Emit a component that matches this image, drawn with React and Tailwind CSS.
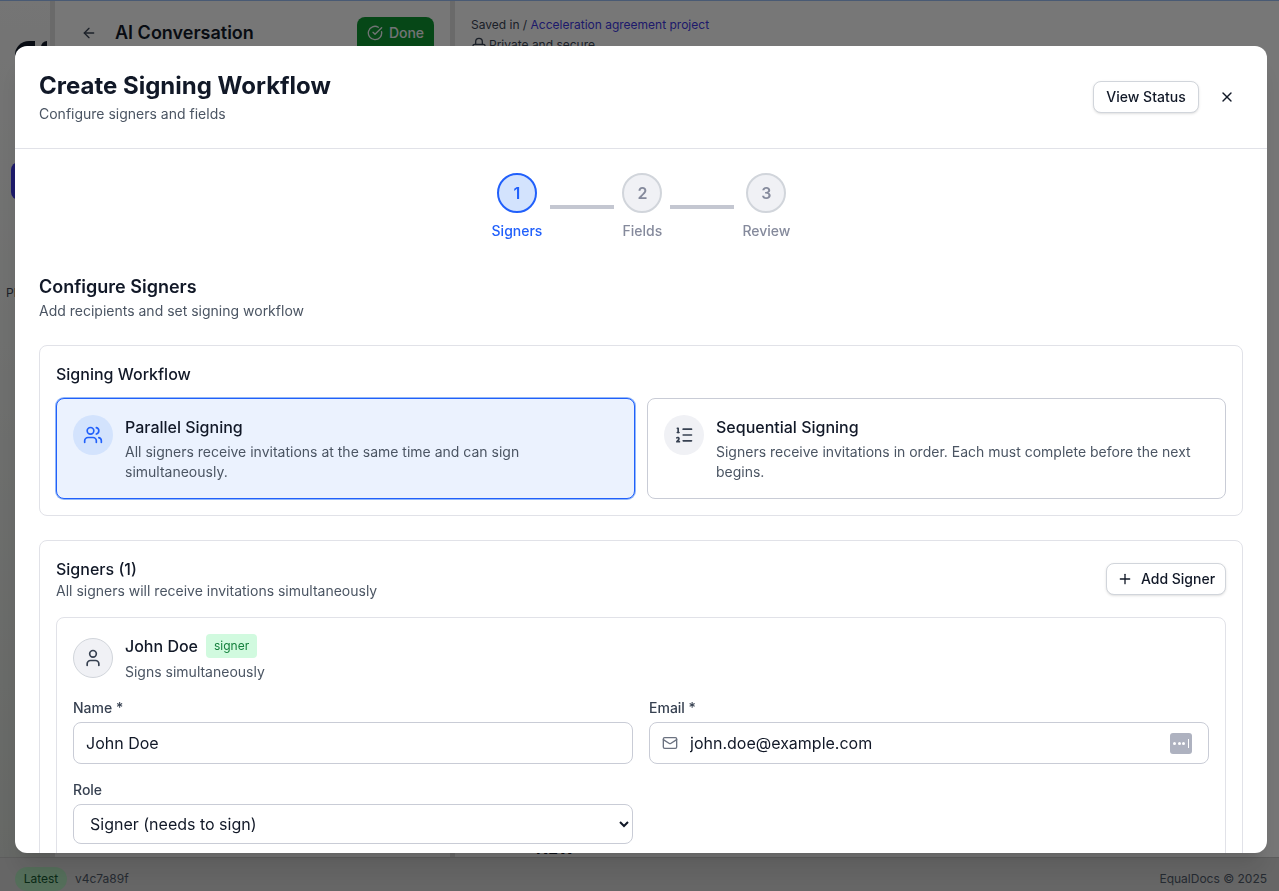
import React from 'react';
import { ArrowLeft, CircleCheckBig, Lock, ListOrdered, Mail, Plus, User, Users, X } from 'lucide-react';

const steps = [
  { n: 1, label: 'Signers', active: true },
  { n: 2, label: 'Fields' },
  { n: 3, label: 'Review' },
];

const Background = () => (
  <div className="h-[891px] flex flex-col bg-white border-t border-[#93b4e8] overflow-hidden">
    <div className="flex-1 flex min-h-0 bg-[#eeeeee] overflow-hidden">
      <div className="w-[50px] shrink-0 bg-linear-to-b from-[#eaeaea] to-[#cdd1cc] pl-[11px]">
        <div className="flex gap-[6px] ml-[4px] mt-[40px]">
          <div className="w-[20px] h-[30px] rounded-tl-[14px] bg-[#111827]"></div>
          <div className="w-[6px] h-[30px] rounded-tl-md bg-[#111827]"></div>
        </div>
        <div className="w-[40px] h-[38px] mt-[91px] rounded-lg bg-[#3b35d6]"></div>
        <p className="mt-[85px] -ml-[5px] text-xs text-[#374151]">Pl</p>
      </div>
      <div className="w-[5px] shrink-0 bg-[#d4d4d4]"></div>
      <div className="w-[395px] shrink-0 flex items-start pl-[26px] pr-[16px] pt-[16px]">
        <ArrowLeft className="w-4 h-4 mt-2 text-[#374151]" />
        <span className="ml-[18px] mt-[2px] text-lg font-semibold text-[#111827]">AI Conversation</span>
        <div className="ml-auto h-[40px] w-[77px] rounded-lg bg-[#0c8f2f] flex items-start justify-center gap-1.5 pt-[6px] text-sm font-medium text-[#e5e7eb]">
          <CircleCheckBig className="w-4 h-4 mt-[2px]" />
          Done
        </div>
      </div>
      <div className="w-[5px] shrink-0 bg-[#d4d4d4]"></div>
      <div className="flex-1 pl-[16px] pt-[14px] text-xs text-[#374151]">
        <p className="leading-5">Saved in /&nbsp;<span className="text-[#3b35d6]">Acceleration agreement project</span></p>
        <p className="flex items-center gap-0.5 leading-4 mt-[2px]"><Lock className="w-4 h-4" /> Private and secure</p>
        <p className="mt-[787px] ml-[65px] text-base font-bold leading-4 text-[#111827]">NEW</p>
      </div>
    </div>
    <div className="h-[34px] shrink-0 border-t border-[#bbbbbb] bg-[#cccccc] flex items-center px-[15px] pt-2 text-xs text-[#4b5563]">
      <span className="h-[24px] w-[52px] rounded-full bg-[#a9dcb5] text-[#14532d] flex items-center justify-center">Latest</span>
      <span className="ml-2">v4c7a89f</span>
      <span className="ml-auto -mr-[3px]">EqualDocs © 2025</span>
    </div>
  </div>
);

const Step = ({ n, label, active }) => (
  <div className="flex flex-col items-center">
    <div className={`w-10 h-10 rounded-full border-2 flex items-center justify-center text-base font-semibold ${active ? 'border-[#2160fb] bg-[#d3e3fd] text-[#2160fb]' : 'border-[#d1d5db] bg-[#f0f1f5] text-[#858a9c]'}`}>
      {n}
    </div>
    <span className={`mt-2 text-sm font-medium leading-5 ${active ? 'text-[#2160fb]' : 'text-[#858a9c]'}`}>{label}</span>
  </div>
);

const WorkflowOption = ({ icon, title, text, selected }) => (
  <div className={`flex-1 flex gap-3 rounded-lg border p-4 ${selected ? 'border-[#2160fb] bg-[#ebf2fe] ring-1 ring-[#93b8f8]' : 'border-[#c9ccd6] bg-white'}`}>
    <div className={`w-10 h-10 shrink-0 rounded-full flex items-center justify-center ${selected ? 'bg-[#d3e3fd] text-[#2160fb]' : 'bg-[#f0f1f5] text-[#374151]'}`}>
      {icon}
    </div>
    <div>
      <p className="text-base font-medium leading-6 text-[#111827]">{title}</p>
      <p className="mt-[3px] text-sm leading-5 text-[#4b5563]">{text}</p>
    </div>
  </div>
);

const PasswordKey = () => (
  <div className="w-[22px] h-[21px] rounded-[3px] bg-[#aeb2c0] flex items-center justify-center gap-[1.5px]">
    <span className="w-[3px] h-[3px] rounded-full bg-white"></span>
    <span className="w-[3px] h-[3px] rounded-full bg-white"></span>
    <span className="w-[3px] h-[3px] rounded-full bg-white"></span>
    <span className="w-px h-[9px] ml-[1px] bg-white"></span>
  </div>
);

const App = () => {
  return (
    <div className="font-['Inter',sans-serif]">
      <Background />
      <div className="fixed inset-0 bg-black/50 pl-[15px] pr-[12px] pt-[46px] pb-[38px]">
        <div className="h-full bg-white rounded-xl shadow-xl flex flex-col overflow-hidden">
          <div className="shrink-0 flex items-center justify-between px-6 py-6 border-b border-[#e1e2e8]">
            <div>
              <h1 className="text-2xl font-bold leading-8 text-[#111827]">Create Signing Workflow</h1>
              <p className="mt-[2px] text-sm leading-5 text-[#4b5563]">Configure signers and fields</p>
            </div>
            <div className="flex items-center gap-3">
              <button className="h-8 w-[106px] rounded-lg border border-[#d1d5db] bg-white shadow-sm text-sm font-medium text-[#111827]">View Status</button>
              <button className="w-8 h-8 flex items-center justify-center text-[#111827]"><X className="w-4 h-4" /></button>
            </div>
          </div>

          <div className="flex-1 min-h-0 overflow-hidden px-6 pt-6">
            <div className="flex justify-center items-start gap-2">
              <Step {...steps[0]} />
              <div className="w-16 h-1 mt-8 bg-[#c4c7d1]"></div>
              <Step {...steps[1]} />
              <div className="w-16 h-1 mt-8 bg-[#c4c7d1]"></div>
              <Step {...steps[2]} />
            </div>

            <h2 className="mt-8 text-lg font-semibold leading-7 text-[#111827]">Configure Signers</h2>
            <p className="text-sm leading-5 text-[#4b5563]">Add recipients and set signing workflow</p>

            <div className="mt-6 rounded-lg border border-[#e1e2e8] p-4">
              <h3 className="text-base font-medium leading-6 text-[#111827]">Signing Workflow</h3>
              <div className="mt-3 flex gap-3">
                <WorkflowOption
                  selected
                  icon={<Users className="w-5 h-5" />}
                  title="Parallel Signing"
                  text="All signers receive invitations at the same time and can sign simultaneously."
                />
                <WorkflowOption
                  icon={<ListOrdered className="w-5 h-5" />}
                  title="Sequential Signing"
                  text="Signers receive invitations in order. Each must complete before the next begins."
                />
              </div>
            </div>

            <div className="mt-6 rounded-lg border border-[#e1e2e8] p-4 pb-10">
              <div className="flex items-center justify-between">
                <div>
                  <h3 className="text-base font-medium leading-6 text-[#111827]">Signers (1)</h3>
                  <p className="text-sm leading-5 text-[#4b5563]">All signers will receive invitations simultaneously</p>
                </div>
                <button className="h-8 w-[120px] rounded-lg border border-[#d1d5db] bg-white shadow-sm flex items-center justify-center gap-2 text-sm font-medium text-[#111827]">
                  <Plus className="w-4 h-4" />
                  Add Signer
                </button>
              </div>

              <div className="mt-4 rounded-lg border border-[#e1e2e8] p-4">
                <div className="flex items-center gap-3">
                  <div className="w-10 h-10 rounded-full border border-[#d1d5db] bg-[#f0f1f5] flex items-center justify-center text-[#374151]">
                    <User className="w-5 h-5" />
                  </div>
                  <div>
                    <div className="flex items-center gap-2">
                      <span className="text-base font-medium leading-6 text-[#111827]">John Doe</span>
                      <span className="h-6 px-2 rounded bg-[#d1fadf] text-xs leading-6 text-[#15803d]">signer</span>
                    </div>
                    <p className="mt-1 text-sm leading-5 text-[#4b5563]">Signs simultaneously</p>
                  </div>
                </div>

                <div className="mt-4 grid grid-cols-2 gap-x-4 gap-y-4">
                  <label className="block">
                    <span className="block text-sm font-medium leading-5 text-[#374151]">Name *</span>
                    <input readOnly value="John Doe" className="mt-1 w-full h-[42px] px-3 rounded-lg border border-[#c9ccd6] text-base text-[#111827] outline-none" />
                  </label>
                  <div>
                    <span className="block text-sm font-medium leading-5 text-[#374151]">Email *</span>
                    <div className="mt-1 h-[42px] pl-3 pr-4 rounded-lg border border-[#c9ccd6] flex items-center">
                      <Mail className="w-4 h-4 text-[#6b7280]" />
                      <input readOnly value="john.doe@example.com" className="ml-3 flex-1 min-w-0 text-base text-[#111827] outline-none" />
                      <PasswordKey />
                    </div>
                  </div>
                  <label className="block">
                    <span className="block text-sm font-medium leading-5 text-[#374151]">Role</span>
                    <select defaultValue="signer" className="mt-1 w-full h-10 px-3 rounded-lg border border-[#c9ccd6] bg-white text-base text-[#111827] outline-none">
                      <option value="signer">Signer (needs to sign)</option>
                    </select>
                  </label>
                </div>
              </div>
            </div>
          </div>
        </div>
      </div>
    </div>
  );
};

export default App;
